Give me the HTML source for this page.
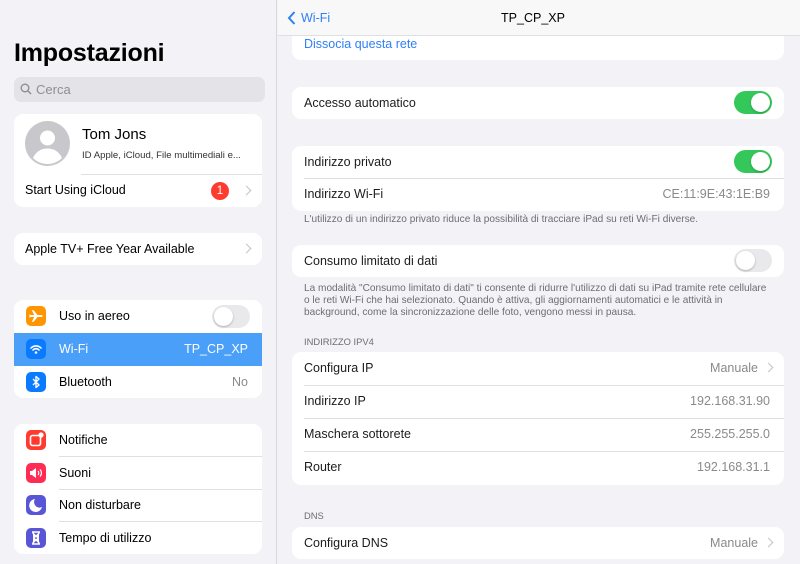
<!DOCTYPE html>
<html><head><meta charset="utf-8"><style>
*{margin:0;padding:0;box-sizing:border-box}
body{width:800px;height:564px;overflow:hidden;background:#f2f2f7;font-family:"Liberation Sans",sans-serif;color:#000;position:relative}
.abs{position:absolute}
#side{left:0;top:0;width:277px;height:564px;background:#f2f2f7;border-right:1px solid #d8d8dc}
h1{position:absolute;left:14px;top:39px;font-size:25px;font-weight:bold;letter-spacing:-0.2px}
.search{left:14px;top:77px;width:251px;height:25px;background:#e3e3e8;border-radius:7px;color:#8e8e93;font-size:13px;line-height:25px;padding-left:22px}
.card{position:absolute;background:#fff;border-radius:9px;overflow:hidden}
.row{position:absolute;left:0;right:0;height:33px;font-size:12.5px;line-height:33px}
.sep{position:absolute;height:1px;background:#e0e0e4;right:0}
.val{position:absolute;right:14px;color:#8a8a8e}
.chev{position:absolute;right:12px;top:12px;width:7px;height:7px;border-right:1.5px solid #c4c4c7;border-top:1.5px solid #c4c4c7;transform:rotate(45deg)}
.ico{position:absolute;left:12px;top:6px;width:20px;height:20px;border-radius:5px}
.ico svg{position:absolute;left:0;top:0}
.lab{position:absolute;left:45px}
.tog{position:absolute;width:38px;height:23px;border-radius:12px}
.tog i{position:absolute;top:2px;width:19px;height:19px;border-radius:50%;background:#fff;box-shadow:0 1px 2px rgba(0,0,0,.25)}
.on{background:#34c759}.on i{right:2px}
.off{background:#e9e9eb}.off i{left:2px}
.rrow{position:absolute;left:0;right:0;height:33px;font-size:12.5px;line-height:33px;padding-left:12px;color:#1c1c1e}
.note{position:absolute;left:304px;font-size:9.4px;color:#6d6d72;line-height:12px;white-space:nowrap}
.big{font-size:10.1px}
</style></head><body>
<div id="side" class="abs">
<h1>Impostazioni</h1>
<div class="abs search"><svg class="abs" style="left:6px;top:6px" width="12" height="12" viewBox="0 0 12 12"><circle cx="5" cy="5" r="3.8" fill="none" stroke="#8e8e93" stroke-width="1.4"/><path d="M8 8l3 3" stroke="#8e8e93" stroke-width="1.5"/></svg>Cerca</div>
<div class="card" style="left:14px;top:114px;width:248px;height:93px">
<svg class="abs" style="left:11px;top:7px" width="45" height="45" viewBox="0 0 45 45"><circle cx="22.5" cy="22.5" r="22.5" fill="#c7c7cc"/><circle cx="22.5" cy="17" r="7.5" fill="#fff"/><path d="M8 37c3-7 9-9.5 14.5-9.5S34 30 37 37c-4 4-9 6-14.5 6S12 41 8 37z" fill="#fff"/></svg>
<div class="abs" style="left:68px;top:12px;font-size:15px">Tom Jons</div>
<div class="abs" style="left:68px;top:36px;font-size:9.6px;color:#333">ID Apple, iCloud, File multimediali e...</div>
<div class="sep" style="left:67px;top:60px"></div>
<div class="row" style="top:60px;padding-left:11px">Start Using iCloud</div>
<div class="abs" style="left:197px;top:68px;width:18px;height:18px;border-radius:50%;background:#ff3b30;color:#fff;font-size:11.5px;text-align:center;line-height:18px">1</div>
<div class="chev" style="top:73px"></div>
</div>
<div class="card" style="left:14px;top:233px;width:248px;height:32px">
<div class="row" style="top:0;padding-left:11px;line-height:32px">Apple TV+ Free Year Available</div><div class="chev"></div></div>
<div class="card" style="left:14px;top:300px;width:248px;height:98px">
<div class="row" style="top:0"><div class="ico" style="background:#ff9500"><svg width="20" height="20" viewBox="0 0 20 20"><path d="M3.5 10c0-.8.6-1 1.5-1h3.2L5.8 4.2h1.8L11.5 9h3.5c1 0 1.7.4 1.7 1s-.7 1-1.7 1h-3.5l-3.9 4.8H5.8L8.2 11H5c-.9 0-1.5-.2-1.5-1z" fill="#fff"/><path d="M3.5 7.8l1.3 2.2-1.3 2.2z" fill="#fff"/></svg></div><span class="lab">Uso in aereo</span><div class="tog off" style="right:12px;top:5px"><i></i></div></div>
<div class="row" style="top:33px;background:#4a9ff9;color:#fff"><div class="ico" style="background:#0a7aff"><svg width="20" height="20" viewBox="0 0 20 20"><path d="M5 9a7 7 0 0 1 10 0M7 11a4 4 0 0 1 6 0" stroke="#fff" stroke-width="1.6" fill="none" stroke-linecap="round"/><circle cx="10" cy="13.5" r="1.3" fill="#fff"/></svg></div><span class="lab">Wi-Fi</span><span class="val" style="color:#fff">TP_CP_XP</span></div>
<div class="row" style="top:66px"><div class="ico" style="background:#0a7aff"><svg width="20" height="20" viewBox="0 0 20 20"><path d="M7 7l6 6-3 2.5V4.5L13 7l-6 6" stroke="#fff" stroke-width="1.4" fill="none" stroke-linejoin="round"/></svg></div><span class="lab">Bluetooth</span><span class="val">No</span></div>
</div>
<div class="card" style="left:14px;top:424px;width:248px;height:130px">
<div class="row" style="top:0"><div class="ico" style="background:#ff3b30"><svg width="20" height="20" viewBox="0 0 20 20"><rect x="4.5" y="5.5" width="10" height="10" rx="2" fill="none" stroke="#fff" stroke-width="1.6"/><circle cx="15" cy="5" r="2.6" fill="#fff"/></svg></div><span class="lab">Notifiche</span></div>
<div class="sep" style="left:45px;top:32px"></div>
<div class="row" style="top:33px"><div class="ico" style="background:#ff2d55"><svg width="20" height="20" viewBox="0 0 20 20"><path d="M4 8h2l4-3v10l-4-3H4z" fill="#fff"/><path d="M12 8a3 3 0 0 1 0 4M14 6.5a5 5 0 0 1 0 7" stroke="#fff" stroke-width="1.2" fill="none"/></svg></div><span class="lab">Suoni</span></div>
<div class="sep" style="left:45px;top:65px"></div>
<div class="row" style="top:65px"><div class="ico" style="background:#5856d6"><svg width="20" height="20" viewBox="0 0 20 20"><path d="M9 4a6.5 6.5 0 1 0 7 8A5.5 5.5 0 0 1 9 4z" fill="#fff"/></svg></div><span class="lab">Non disturbare</span></div>
<div class="sep" style="left:45px;top:97px"></div>
<div class="row" style="top:98px"><div class="ico" style="background:#5856d6"><svg width="20" height="20" viewBox="0 0 20 20"><path d="M6 4h8M6 16h8M7 4c0 4 5 4 5 6s-5 2-5 6M13 4c0 4-5 4-5 6s5 2 5 6" stroke="#fff" stroke-width="1.6" fill="#fff"/></svg></div><span class="lab">Tempo di utilizzo</span></div>
</div>
</div>

<div class="card" style="left:292px;top:20px;width:492px;height:40px;border-radius:9px"><div class="abs" style="left:12px;top:17px;font-size:12.5px;color:#2f80f6">Dissocia questa rete</div></div>
<div class="abs" style="left:278px;top:0;width:522px;height:36px;background:#f8f8f9;border-bottom:1px solid #e0e0e2">
<svg class="abs" style="left:9px;top:11px" width="9" height="14" viewBox="0 0 9 14"><path d="M7.5 1L2 7l5.5 6" stroke="#2f80f6" stroke-width="2" fill="none"/></svg>
<div class="abs" style="left:23px;top:11px;font-size:12.5px;color:#2f80f6">Wi-Fi</div>
<div class="abs" style="left:0;right:0;top:11px;text-align:center;font-size:12.5px;padding-right:12px">TP_CP_XP</div>
</div>

<div class="card" style="left:292px;top:87px;width:492px;height:32px"><div class="rrow" style="top:0;line-height:32px">Accesso automatico</div><div class="tog on" style="right:12px;top:4px"><i></i></div></div>
<div class="card" style="left:292px;top:146px;width:492px;height:65px">
<div class="rrow" style="top:0">Indirizzo privato</div><div class="tog on" style="right:12px;top:4px"><i></i></div>
<div class="sep" style="left:12px;top:32px"></div>
<div class="rrow" style="top:32px">Indirizzo Wi-Fi<span class="val">CE:11:9E:43:1E:B9</span></div></div>
<div class="note big" style="top:214px">L'utilizzo di un indirizzo privato riduce la possibilità di tracciare iPad su reti Wi-Fi diverse.</div>
<div class="card" style="left:292px;top:245px;width:492px;height:32px"><div class="rrow" style="top:0;line-height:32px">Consumo limitato di dati</div><div class="tog off" style="right:12px;top:4px"><i></i></div></div>
<div class="note big" style="top:283px">La modalità "Consumo limitato di dati" ti consente di ridurre l'utilizzo di dati su iPad tramite rete cellulare<br>o le reti Wi-Fi che hai selezionato. Quando è attiva, gli aggiornamenti automatici e le attività in<br>background, come la sincronizzazione delle foto, vengono messi in pausa.</div>
<div class="note" style="top:336px">INDIRIZZO IPV4</div>
<div class="card" style="left:292px;top:352px;width:492px;height:133px">
<div class="rrow" style="top:0">Configura IP<span class="val" style="right:26px">Manuale</span><div class="chev"></div></div>
<div class="sep" style="left:12px;top:33px"></div>
<div class="rrow" style="top:33px">Indirizzo IP<span class="val">192.168.31.90</span></div>
<div class="sep" style="left:12px;top:66px"></div>
<div class="rrow" style="top:66px">Maschera sottorete<span class="val">255.255.255.0</span></div>
<div class="sep" style="left:12px;top:99px"></div>
<div class="rrow" style="top:99px">Router<span class="val">192.168.31.1</span></div>
</div>
<div class="note" style="top:510px">DNS</div>
<div class="card" style="left:292px;top:527px;width:492px;height:32px"><div class="rrow" style="top:0;line-height:32px">Configura DNS<span class="val" style="right:26px">Manuale</span><div class="chev"></div></div></div>
</body></html>
